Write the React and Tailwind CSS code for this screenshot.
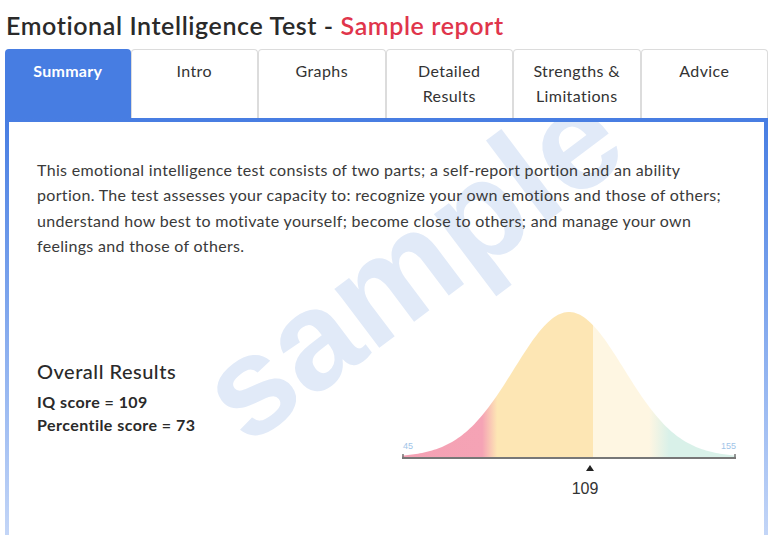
const tabs = [
  ["Summary"],
  ["Intro"],
  ["Graphs"],
  ["Detailed", "Results"],
  ["Strengths &", "Limitations"],
  ["Advice"],
];

const intro = [
  "This emotional intelligence test consists of two parts; a self-report portion and an ability",
  "portion. The test assesses your capacity to: recognize your own emotions and those of others;",
  "understand how best to motivate yourself; become close to others; and manage your own",
  "feelings and those of others.",
];

function bellPath() {
  // axis from x=10 to x=344, baseline y=157, peak y=12
  const pts = [];
  for (let x = 10; x <= 344; x += 2) {
    const d = x - 177;
    const y = 157 - 145 * Math.exp(-(d * d) / (2 * 55 * 55));
    pts.push(`${x},${y.toFixed(2)}`);
  }
  return `M10,157 L${pts.join(" L")} L344,157 Z`;
}

function BellChart() {
  return (
    <svg width="360" height="205" viewBox="0 0 360 205" className="block">
      <defs>
        <linearGradient id="bell" x1="10" y1="0" x2="344" y2="0" gradientUnits="userSpaceOnUse">
          <stop offset="0" stopColor="#f4a1b4" />
          <stop offset="0.24" stopColor="#f5a3b5" />
          <stop offset="0.285" stopColor="#fde6b4" />
          <stop offset="0.572" stopColor="#fde6b4" />
          <stop offset="0.572" stopColor="#fef6e2" />
          <stop offset="0.74" stopColor="#fef6e2" />
          <stop offset="0.8" stopColor="#d9f1e9" />
          <stop offset="1" stopColor="#d9f1e9" />
        </linearGradient>
      </defs>
      <path d={bellPath()} fill="url(#bell)" />
      <line x1="10" y1="158" x2="344" y2="158" stroke="#777" strokeWidth="2" />
      <line x1="11" y1="154" x2="11" y2="159" stroke="#777" strokeWidth="1.5" />
      <line x1="343" y1="154" x2="343" y2="159" stroke="#777" strokeWidth="1.5" />
      <text x="11" y="149" fontSize="9" fill="#9fc4e8" fontFamily="Liberation Sans, sans-serif">45</text>
      <text x="344" y="149" fontSize="9" fill="#9fc4e8" textAnchor="end" fontFamily="Liberation Sans, sans-serif">155</text>
      <path d="M194,171 L198,165 L202,171 Z" fill="#222" />
      <text x="193" y="194" fontSize="16" fill="#333" textAnchor="middle" fontFamily="Liberation Sans, sans-serif">109</text>
    </svg>
  );
}

export default function App() {
  return (
    <div className="w-[768px] h-[535px] overflow-hidden bg-white font-['Lato',sans-serif] text-[#333]">
      <h1 className="pl-[6px] pt-[10px] h-[49px] text-[25px] leading-[30px] font-semibold tracking-[0.6px] text-[#2a2a2a]">
        Emotional Intelligence Test - <span className="text-[#e0354b]">Sample report</span>
      </h1>

      <div className="flex pl-[5px]">
        {tabs.map((t, i) => (
          <div
            key={i}
            className={
              i === 0
                ? "flex-1 h-[69px] rounded-t-[4px] bg-[#477de2] text-white font-bold text-center pt-[9px] text-[16px] leading-[25px] tracking-[0.3px]"
                : "flex-1 h-[69px] rounded-t-[4px] bg-white border border-b-0 border-[#dcdcdc] text-center pt-[8px] text-[16px] leading-[25px] tracking-[0.4px] text-[#333]"
            }
          >
            {t.map((line) => (
              <div key={line}>{line}</div>
            ))}
          </div>
        ))}
      </div>

      <div className="ml-[5px] pt-[4px] px-[4px] h-[420px] bg-gradient-to-b from-[#477de2] to-[#c4d6f7]">
        <div className="relative h-full bg-white overflow-hidden px-[28px] pt-[35px]">
          <div className="absolute left-[402px] top-[142px] -translate-x-1/2 -translate-y-1/2 -rotate-[37deg] text-[140px] leading-none font-bold font-['Liberation_Sans',sans-serif] text-[#e1eaf8] select-none">
            sample
          </div>

          <p className="relative text-[16px] leading-[25.3px] tracking-[0.32px] text-[#3a3a3a] whitespace-nowrap">
            {intro.map((line) => (
              <span key={line} className="block">{line}</span>
            ))}
          </p>

          <div className="relative flex mt-[42px]">
            <div className="pt-[57px]">
              <h2 className="text-[20px] leading-[28px] font-medium tracking-[0.5px] text-[#2a2a2a]">Overall Results</h2>
              <div className="mt-[5px] text-[16px] leading-[23px] font-bold tracking-[0.45px] text-[#2a2a2a]">
                <div>IQ score = 109</div>
                <div>Percentile score = 73</div>
              </div>
            </div>
            <div className="ml-auto -mr-[16px]">
              <BellChart />
            </div>
          </div>
        </div>
      </div>
    </div>
  );
}
